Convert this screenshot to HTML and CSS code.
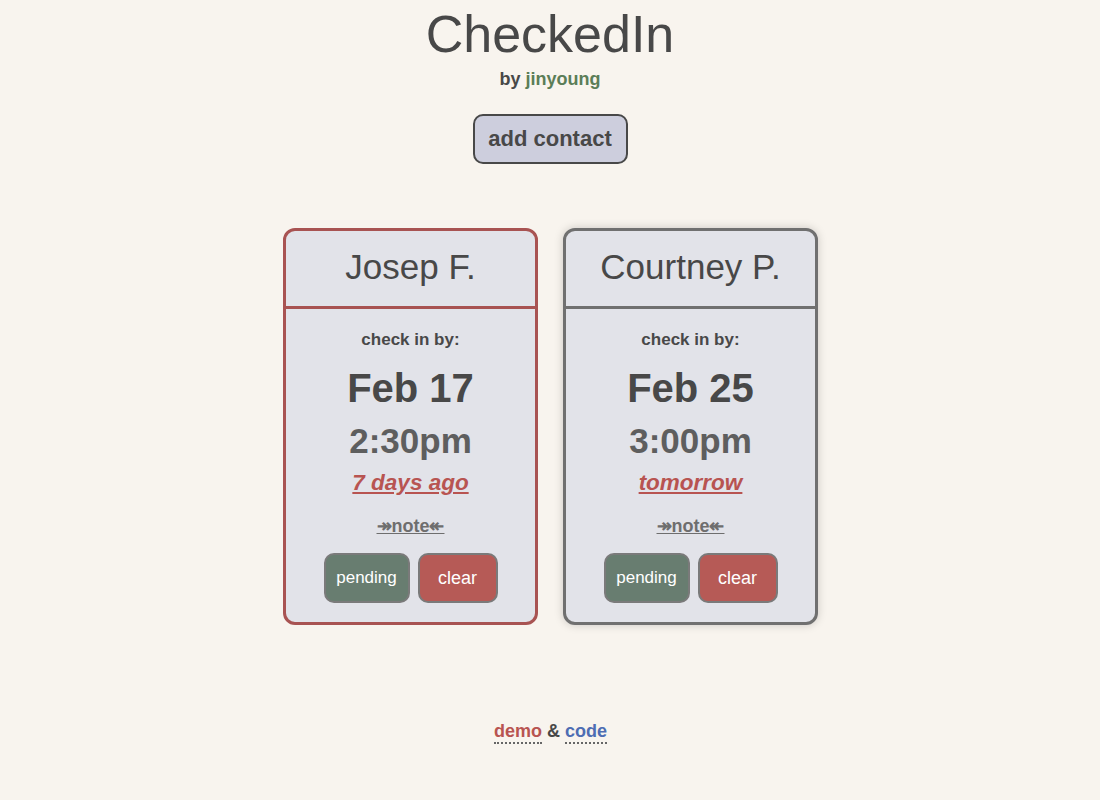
FILE: index.html
```html
<!DOCTYPE html>
<html>
<head>
<meta charset="utf-8">
<link rel="stylesheet" href="styles.css">
</head>
<body>
<header class="top">
  <h1 class="title">CheckedIn</h1>
  <div class="byline">by <span class="author">jinyoung</span></div>
  <button class="add-btn">add contact</button>
</header>
<main class="cards">
  <section class="card card-late">
    <div class="card-head">Josep F.</div>
    <div class="card-body">
      <div class="label">check in by:</div>
      <div class="date">Feb 17</div>
      <div class="time">2:30pm</div>
      <div class="rel">7 days ago</div>
      <div class="note">↠note↞</div>
      <div class="actions">
        <button class="btn btn-pending">pending</button>
        <button class="btn btn-clear">clear</button>
      </div>
    </div>
  </section>
  <section class="card card-normal">
    <div class="card-head">Courtney P.</div>
    <div class="card-body">
      <div class="label">check in by:</div>
      <div class="date">Feb 25</div>
      <div class="time">3:00pm</div>
      <div class="rel">tomorrow</div>
      <div class="note">↠note↞</div>
      <div class="actions">
        <button class="btn btn-pending">pending</button>
        <button class="btn btn-clear">clear</button>
      </div>
    </div>
  </section>
</main>
<footer class="foot">
  <span class="link demo">demo</span> &amp; <span class="link code">code</span>
</footer>
</body>
</html>
```
FILE: styles.css
```css
html, body {
  margin: 0;
  padding: 0;
}
body {
  background: #f8f4ee;
  font-family: "Liberation Sans", Arial, sans-serif;
  color: #484848;
  width: 1100px;
  height: 800px;
}
.top {
  display: flex;
  flex-direction: column;
  align-items: center;
}
.title {
  margin: 4px 0 0 0;
  font-size: 52px;
  font-weight: normal;
  line-height: 60px;
  color: #484848;
}
.byline {
  margin-top: 4px;
  font-size: 18px;
  font-weight: bold;
  line-height: 22px;
  color: #484848;
}
.author {
  color: #5b7d57;
}
.add-btn {
  margin-top: 24px;
  width: 155px;
  height: 50px;
  background: #cdcedd;
  border: 2px solid #484848;
  border-radius: 10px;
  font-family: "Liberation Sans", Arial, sans-serif;
  font-weight: bold;
  font-size: 22px;
  color: #484848;
  padding: 0;
}
.cards {
  display: flex;
  justify-content: center;
  gap: 25px;
  margin-top: 64px;
  padding-left: 1px;
}
.card {
  width: 255px;
  height: 397px;
  box-sizing: border-box;
  border: 3px solid #707070;
  border-radius: 12px;
  background: #e2e3e9;
  overflow: hidden;
  display: flex;
  flex-direction: column;
}
.card-late {
  border-color: #a85352;
}
.card-normal {
  box-shadow: 0 0 10px rgba(0, 0, 0, 0.18);
}
.card-head {
  height: 78px;
  box-sizing: border-box;
  border-bottom: 3px solid #707070;
  display: flex;
  align-items: center;
  justify-content: center;
  font-size: 35px;
  color: #484848;
  padding-bottom: 3px;
}
.card-late .card-head {
  border-bottom-color: #a85352;
}
.card-body {
  display: flex;
  flex-direction: column;
  align-items: center;
  padding-top: 20px;
}
.label {
  font-size: 17px;
  font-weight: bold;
  line-height: 22px;
  color: #484848;
}
.date {
  margin-top: 13px;
  font-size: 40px;
  font-weight: bold;
  line-height: 48px;
  color: #484848;
}
.time {
  margin-top: 8px;
  font-size: 35px;
  font-weight: bold;
  line-height: 42px;
  color: #5e5e5e;
}
.rel {
  margin-top: 7px;
  font-size: 22.5px;
  font-weight: bold;
  font-style: italic;
  text-decoration: underline;
  line-height: 28px;
  color: #b85451;
}
.note {
  margin-top: 18px;
  font-size: 18px;
  font-weight: bold;
  text-decoration: underline;
  line-height: 22px;
  color: #6e6e6e;
}
.actions {
  display: flex;
  gap: 8px;
  margin-top: 16px;
}
.btn {
  height: 50px;
  border: 2px solid #7a7a7a;
  border-radius: 10px;
  color: #ffffff;
  font-family: "Liberation Sans", Arial, sans-serif;
  font-size: 17px;
  padding: 0;
}
.btn-pending {
  width: 86px;
  background: #687d70;
}
.btn-clear {
  width: 80px;
  background: #b65a56;
  font-size: 18px;
}
.foot {
  margin-top: 94px;
  text-align: center;
  font-size: 18px;
  font-weight: bold;
  line-height: 24px;
  color: #484848;
  padding-left: 1px;
}
.link {
  border-bottom: 2px dotted #666666;
  padding-bottom: 1px;
}
.demo {
  color: #b85451;
}
.code {
  color: #4e6db3;
}
```
